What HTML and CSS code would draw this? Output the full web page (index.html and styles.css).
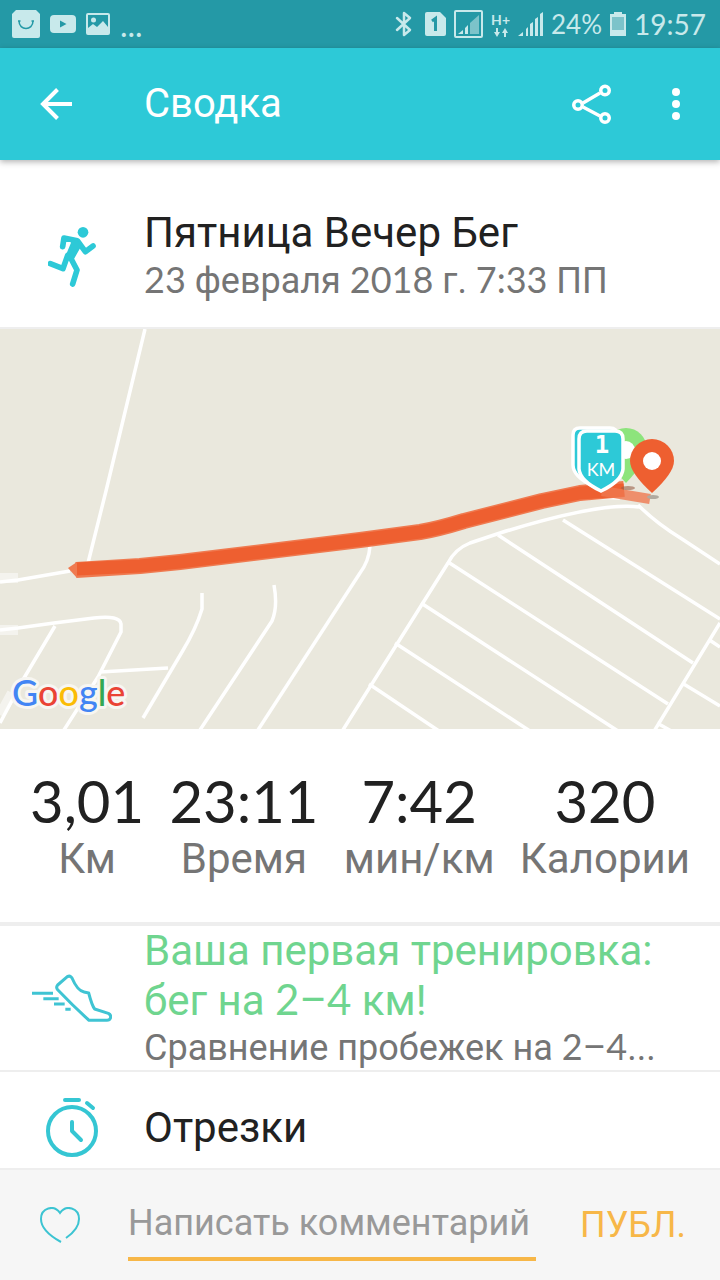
FILE: index.html
```html
<!DOCTYPE html>
<html lang="ru">
<head>
  <meta charset="UTF-8" />
  <meta name="viewport" content="width=device-width, initial-scale=1.0"/>
  <title>Сводка</title>
  <link rel="stylesheet" href="styles.css">
</head>
<body>

  <div class="status-bar">
    <div class="status-left">
      <svg width="28" height="28" viewBox="0 0 28 28"><path d="M4 0h20l4 4v22a2 2 0 0 1-2 2H2a2 2 0 0 1-2-2V4z" fill="#c8e9eb"/><path d="M6 11h2.500M19.500 11H22M7 11c0 10 14 10 14 0" fill="none" stroke="#2499a6" stroke-width="1.500"/></svg>
      <svg width="26" height="18" viewBox="0 0 26 18"><rect width="26" height="18" rx="4" fill="#c8e9eb"/><path d="M10 5.500v7L16.500 9z" fill="#2499a6"/></svg>
      <svg width="24" height="22" viewBox="0 0 24 22"><path fill-rule="evenodd" d="M2 0h20a2 2 0 0 1 2 2v18a2 2 0 0 1-2 2H2a2 2 0 0 1-2-2V2a2 2 0 0 1 2-2zM2 2v13l5-4 4 3 6-6 5 6V2z" fill="#c8e9eb"/><circle cx="7.500" cy="7" r="2.500" fill="#c8e9eb"/></svg>
      <span class="dots">...</span>
    </div>
    <div class="status-right">
      <svg class="bluetooth" width="18" height="26" viewBox="0 0 18 26"><path d="M2 7l13 12-6 5V2l6 5L2 19" fill="none" stroke="#c8e9eb" stroke-width="2.500" stroke-linejoin="round" stroke-linecap="round"/></svg>
      <svg width="21" height="24" viewBox="0 0 21 24"><path d="M2 0h13l6 6v16a2 2 0 0 1-2 2H2a2 2 0 0 1-2-2V2a2 2 0 0 1 2-2z" fill="#c8e9eb"/><path d="M7 9l3.500-2.500V19" fill="none" stroke="#2499a6" stroke-width="3"/></svg>
      <svg width="29" height="28" viewBox="0 0 29 28"><rect x="1" y="1" width="27" height="26" rx="1" fill="none" stroke="#c8e9eb" stroke-width="2"/><path d="M4 24l5-4v4zM11 18l3-3v9h-3z" fill="#c8e9eb"/><path d="M16 13L25 5v19h-9z" fill="#7cc3ca"/></svg>
      <div class="net">
        <span>H+</span>
        <svg width="14" height="9" viewBox="0 0 14 9"><path d="M2 0h2v4h2L3 9 0 4h2zM10 9h2V5h2l-3-5-3 5h2z" fill="#c8e9eb"/></svg>
      </div>
      <svg width="25" height="25" viewBox="0 0 25 25"><path d="M0 24l5-4v4zM8 17l2-2v9H8zM12 12l3-2v14h-3zM17 7l3-2v19h-3zM22 2l3-2v24h-3z" fill="#c8e9eb"/></svg>
      <span class="percent">24%</span>
      <svg width="16" height="24" viewBox="0 0 16 24"><path d="M4 0h8v2h4v22H0V2h4z" fill="#c8e9eb"/><path d="M2 5h12v13H2z" fill="#7cc3ca"/></svg>
      <span>19:57</span>
    </div>
  </div>

  <header class="app-bar">
    <button class="icon-btn back" aria-label="Назад">
      <svg width="32" height="32" viewBox="0 0 32 32"><path d="M32 16H3M17.500 1.500L3 16l14.500 14.500" fill="none" stroke="#fff" stroke-width="4"/></svg>
    </button>
    <h1>Сводка</h1>
    <button class="icon-btn" aria-label="Поделиться">
      <svg width="40" height="40" viewBox="0 0 40 40"><g fill="none" stroke="#fff" stroke-width="3.500"><path d="M11 19L28 9M11 23l17 9"/><circle cx="6" cy="21" r="4.250"/><circle cx="33" cy="6.500" r="4.250"/><circle cx="33" cy="34" r="4.250"/></g></svg>
    </button>
    <button class="icon-btn" aria-label="Ещё">
      <svg width="8" height="32" viewBox="0 0 8 32"><g fill="#fff"><circle cx="4" cy="4" r="4"/><circle cx="4" cy="16" r="4"/><circle cx="4" cy="28" r="4"/></g></svg>
    </button>
  </header>

  <main>
    <section class="activity">
      <div class="row-icon">
        <svg width="48" height="62" viewBox="144 74 144 186"><g fill="none" stroke="#2dc9d7" stroke-width="17" stroke-linecap="round" stroke-linejoin="round"><path d="M188 136l4-26 40 8 24 33 23-17M151 187l38 15 14-40M212 170l19 36-13 42"/></g><path d="M209 112l26 8 9 14-25 44-25-8 19-46z" fill="#2dc9d7"/><circle cx="249" cy="93" r="16" fill="#2dc9d7"/></svg>
      </div>
      <div>
        <h2>Пятница Вечер Бег</h2>
        <p class="sub"><span class="num">23</span> февраля <span class="num">2018</span> г. <span class="num">7:33</span> ПП</p>
      </div>
    </section>

    <svg class="map" viewBox="0 328 720 400" preserveAspectRatio="xMidYMid slice">
      <rect y="328" width="720" height="400" fill="#eae8dd"/>

      <!-- calles -->
      <g fill="none" stroke="#fff" stroke-width="3.500" stroke-linejoin="round">
        <path d="M145 328L106 490 88 562M0 581l18-2 52-9"/>
        <path d="M0 629l18-2 36-5 40-5q26-3 27 6v8L98 676 62 732M55 625L24 677 0 722M100 671l68-4"/>
        <path d="M202 592v16q-6 20-20 43L143 717"/>
        <path d="M274 584q4 22-2 36L198 732"/>
        <path d="M370 545q-1 15-10 27L256 732"/>
        <path d="M341 732l107-170q7-14 22-20l30-10q100-31 139-26M342 729"/>
        <path d="M638 504q18 18 44 34l38 25"/>
        <path d="M563 519l157 99M498 534l195 128M448 561l220 142M421 602l197 128M395 642l138 90M369 683l70 47"/>
        <path d="M720 622l-67 110M711 640l9 6M682 682l38 23M657 722l16 9"/>
        <path d="M440 530q120-37 180-33"/>
      </g>
      <g stroke="#fff" stroke-width="10" opacity=".5"><path d="M0 577h18M0 629h18M0 714l12-22"/></g>

      <!-- recorrido -->
      <g fill="none" stroke-linejoin="round">
        <path d="M76 569l64-4 40-4 180-22 60-8q18-3 44-11l78-20 38-8 44-4" stroke="#ef7a50" stroke-width="16"/>
        <path d="M76 568l64-3 40-4 180-22 60-8q18-3 44-11l78-20 38-8 44-3" stroke="#ee5f30" stroke-width="13"/>
        <path d="M602 490l48 8" stroke="#ef7850" stroke-width="10" opacity=".8"/>
        <path d="M77 561l-9 6 9 10z" fill="#ef7a50"/>
      </g>

      <ellipse cx="628" cy="487" rx="7" ry="2" fill="#9a5f48" opacity=".6"/>
      <ellipse cx="653" cy="496" rx="6" ry="2" fill="#b0aaa0"/>
      <path d="M626 482q-21-22-21-34a21 21 0 0 1 42 0q0 12-21 34z" fill="#8de47c"/>
      <circle cx="626" cy="449" r="9" fill="#fff"/>
      <path d="M652 492q-22-20-22-32a22 22 0 0 1 44 0q0 12-22 32z" fill="#ee5f30"/>
      <circle cx="652" cy="460" r="9" fill="#fff"/>
      <g fill="#2dc9d7" stroke="#fff" stroke-width="3.500">
        <path d="M580 427h30q7 0 7 7v30q0 12-22 22-22-10-22-22v-30q0-7 7-7z"/>
        <path d="M587 430h28q8 0 8 8v30q-1 12-22 22-21-10-22-22v-30q0-8 8-8z"/>
      </g>
      <text class="km-num" x="602" y="452">1</text>
      <text class="km" x="601" y="475">KM</text>

      <text class="google" x="12" y="705"><tspan class="g-blue">G</tspan><tspan class="g-red">o</tspan><tspan class="g-yellow">o</tspan><tspan class="g-blue">g</tspan><tspan class="g-green">l</tspan><tspan class="g-red">e</tspan></text>
    </svg>

    <section class="stats">
      <div><strong>3,01</strong><span>Км</span></div>
      <div><strong>23:11</strong><span>Время</span></div>
      <div><strong>7:42</strong><span>мин/км</span></div>
      <div><strong>320</strong><span>Калории</span></div>
    </section>

    <section class="row">
      <div class="row-icon">
        <svg width="80" height="48" viewBox="96 148 240 144"><g fill="none" stroke="#3fc4d3" stroke-width="9" stroke-linejoin="round"><path d="M202 156q9-5 14 4 16 38 36 42l14 3q10 38 18 48l41 13q10 5 6 15-2 6-10 6h-54q-46-42-94-92-6-7 0-14z"/><path d="M96 206h63M130 222h46M162 238h32M196 254h16" stroke-width="9"/></g></svg>
      </div>
      <div class="row-text">
        <h3 class="record">Ваша первая тренировка:<br>бег на <span class="num">2</span>–<span class="num">4</span> км!</h3>
        <p class="compare">Сравнение пробежек на <span class="num">2</span>–<span class="num">4</span>...</p>
      </div>
    </section>

    <section class="row splits">
      <div class="row-icon">
        <svg width="52" height="60" viewBox="0 0 52 60"><g fill="none" stroke="#35c6d3" stroke-width="4" stroke-linecap="round" stroke-linejoin="round"><circle cx="26" cy="33" r="24"/><path d="M19 2h14M41 5l6 5M26 24v9l9 9"/></g></svg>
      </div>
      <h3>Отрезки</h3>
    </section>
  </main>

  <form class="comment-bar">
    <button type="button" class="icon-btn like" aria-label="Нравится">
      <svg width="40" height="36" viewBox="0 0 40 36"><path d="M21 35Q1 24 1 12C1 1 14-3 20 6c6-9 19-5 19 6q0 10-13 19" fill="none" stroke="#3cc4d2" stroke-width="2"/></svg>
    </button>
    <input type="text" aria-label="Комментарий" placeholder="Написать комментарий">
    <button type="submit" class="publish">ПУБЛ.</button>
  </form>

</body>
</html>
```
FILE: styles.css
```css
* {
  box-sizing: border-box;
}

body {
  margin: 0;
  height: 100vh;
  display: flex;
  flex-direction: column;
  font-family: Roboto, "Noto Sans", sans-serif;
  background-color: #fff;
  color: #212121;
}

h1, h2, h3, p {
  margin: 0;
  font-weight: 400;
}

.num {
  font-family: Lato, sans-serif;
  line-height: 1;
}

/* ========== BARRA DE ESTADO ========== */
.status-bar {
  height: 48px;
  flex: none;
  display: flex;
  justify-content: space-between;
  align-items: center;
  padding: 0 14px 0 12px;
  background-color: #2499a6;
  color: #c8e9eb;
  font-family: Lato, sans-serif;
  font-size: 28px;
}

.status-left {
  display: flex;
  align-items: center;
  gap: 10px;
}

.status-right {
  display: flex;
  align-items: center;
  gap: 8px;
}

.bluetooth {
  margin-right: 4px;
}

.percent {
  font-size: 26px;
}

.dots {
  font-size: 32px;
}

.net {
  display: flex;
  flex-direction: column;
  align-items: center;
  font-size: 14px;
  font-weight: 700;
  line-height: 16px;
}

/* ========== CABECERA ========== */
.app-bar {
  height: 112px;
  flex: none;
  display: flex;
  align-items: center;
  gap: 60px;
  padding: 0 40px;
  background-color: #2dc9d7;
  color: #fff;
  box-shadow: 0 2px 6px rgba(0, 0, 0, 0.3);
  z-index: 1;
}

.app-bar h1 {
  flex: 1;
  font-size: 40px;
  line-height: 48px;
}

.icon-btn {
  display: flex;
  padding: 0;
  border: none;
  background: none;
  cursor: pointer;
}

.back {
  width: 44px;
}

/* ========== CONTENIDO ========== */
main {
  flex: 1;
  min-height: 0;
  overflow-y: auto;
  scrollbar-width: none;
}

.activity {
  display: flex;
  align-items: center;
  padding: 49px 0 22px;
  border-bottom: 2px solid #eee;
}

.row-icon {
  width: 144px;
  flex: none;
  display: flex;
  justify-content: center;
}

h2, h3 {
  font-size: 42px;
  line-height: 48px;
}

.sub {
  font-size: 36px;
  line-height: 48px;
  color: #757575;
}

.map {
  display: block;
  width: 100%;
  height: 400px;
}

.km-num, .km {
  fill: #fff;
  font-family: "DejaVu Sans Mono", monospace;
  font-size: 24px;
  font-weight: 700;
  text-anchor: middle;
}

.km {
  font-family: Lato, sans-serif;
  font-size: 18px;
  font-weight: 400;
}

.google {
  font-family: Lato, sans-serif;
  font-size: 36px;
  font-weight: 500;
  stroke: #f7f6f2;
  stroke-width: 6px;
  stroke-linejoin: round;
  paint-order: stroke;
}

.g-blue { fill: #4285f4; }
.g-red { fill: #ea4335; }
.g-yellow { fill: #fbbc05; }
.g-green { fill: #34a853; }

.stats {
  display: flex;
  justify-content: space-between;
  padding: 42px 30px 35px;
  border-bottom: 4px solid #eee;
}

.stats div {
  display: flex;
  flex-direction: column;
  align-items: center;
}

.stats strong {
  font-family: Lato, sans-serif;
  font-size: 58px;
  font-weight: 400;
  line-height: 60px;
}

.stats span {
  font-size: 42px;
  line-height: 56px;
  color: #757575;
}

.row {
  display: flex;
  align-items: center;
  border-bottom: 2px solid #eee;
}

.row-text {
  min-width: 0;
}

.record {
  line-height: 50px;
  color: #6fd58f;
}

.compare {
  font-size: 36px;
  line-height: 44px;
  color: #757575;
  white-space: nowrap;
}

.splits {
  height: 114px;
}

/* ========== COMENTARIO ========== */
.comment-bar {
  height: 112px;
  flex: none;
  display: flex;
  align-items: center;
  padding: 0 34px 0 40px;
  background-color: #f6f6f6;
  border-top: 2px solid #eee;
}

.like {
  width: 88px;
}

.comment-bar input {
  flex: 1;
  min-width: 0;
  height: 72px;
  padding: 0;
  border: none;
  border-bottom: 4px solid #f7b748;
  background: none;
  font: inherit;
  font-size: 36px;
  outline: none;
}

.comment-bar input::placeholder {
  color: #999;
}

.publish {
  margin-left: 44px;
  padding: 0;
  border: none;
  background: none;
  font: inherit;
  font-size: 36px;
  color: #f7b748;
  cursor: pointer;
}
```
